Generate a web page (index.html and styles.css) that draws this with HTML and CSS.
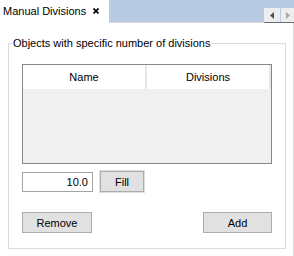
FILE: index.html
```html
<!DOCTYPE html>
<html lang="en">
<head>
    <meta charset="UTF-8">
    <meta name="viewport" content="width=device-width, initial-scale=1.0">
    <title>Manual Divisions</title>
    <link rel="stylesheet" href="styles.css">
</head>
<body>
    <div class="tabbar">
        <div class="tab">
            <span class="tab-title">Manual Divisions</span>
            <svg class="tab-close" width="6" height="6" viewBox="0 0 6 6">
                <path d="M0.5 0.5 L5.5 5.5 M5.5 0.5 L0.5 5.5" stroke="#000" stroke-width="1.7"/>
            </svg>
        </div>
        <div class="tab-strip">
            <div class="scroll-btns">
                <span class="scroll-btn scroll-left">
                    <svg width="4" height="7" viewBox="0 0 4 7"><path d="M4 0 L0 3.5 L4 7 Z" fill="#505050"/></svg>
                </span>
                <span class="scroll-btn scroll-right">
                    <svg width="4" height="7" viewBox="0 0 4 7"><path d="M0 0 L4 3.5 L0 7 Z" fill="#a8a8a8"/></svg>
                </span>
            </div>
        </div>
    </div>

    <div class="pane">
        <fieldset class="group">
            <legend>Objects with specific number of divisions</legend>

            <div class="grid">
                <div class="grid-head">
                    <div class="grid-col">Name</div>
                    <div class="grid-col">Divisions</div>
                </div>
                <div class="grid-body"></div>
            </div>

            <div class="fill-row">
                <input type="text" class="num-input" value="10.0">
                <button class="btn btn-fill">Fill</button>
            </div>

            <div class="action-row">
                <button class="btn btn-remove">Remove</button>
                <button class="btn btn-add">Add</button>
            </div>
        </fieldset>
    </div>
</body>
</html>
```

FILE: styles.css
```css
body {
    margin: 0;
    width: 294px;
    height: 256px;
    overflow: hidden;
    background-color: #fff;
    color: #000;
    font-family: "Liberation Sans", Arial, sans-serif;
    font-size: 11px;
}

.tabbar {
    display: flex;
    height: 23px;
}

.tab {
    width: 109px;
    box-sizing: border-box;
    display: flex;
    align-items: center;
    padding: 0 0 1px 3px;
    background-color: #fff;
}

.tab-close {
    margin-left: 7px;
    margin-top: -1px;
}

.tab-strip {
    flex: 1;
    display: flex;
    justify-content: flex-end;
    align-items: flex-end;
    background-color: #b8cbe3;
    border-bottom: 1px solid #dadada;
}

.scroll-btns {
    display: flex;
    gap: 1px;
    width: 30px;
    margin-bottom: -1px;
    border-bottom: 1px solid #6e6e6e;
}

.scroll-btn {
    height: 14px;
    display: flex;
    align-items: center;
    justify-content: center;
    background-color: #ededed;
}

.scroll-left {
    width: 16px;
}

.scroll-right {
    width: 13px;
}

.pane {
    height: 233px;
    box-sizing: border-box;
    padding: 13px 0 0 8px;
    border-right: 1px solid #d9d9d9;
}

.group {
    width: 278px;
    box-sizing: border-box;
    margin: 0;
    padding: 14px 13px 15px 13px;
    border: 1px solid #dcdcdc;
}

.group legend {
    margin-left: -10px;
    padding: 0 1px;
    line-height: 14px;
}

.grid {
    height: 100px;
    box-sizing: border-box;
    display: flex;
    flex-direction: column;
    border: 1px solid #828790;
}

.grid-head {
    display: flex;
    height: 24px;
    background-color: #fff;
}

.grid-col {
    flex: 1;
    display: flex;
    align-items: center;
    justify-content: center;
    border-right: 2px solid #e6e6e6;
}

.grid-body {
    flex: 1;
    background-color: #f0f0f0;
}

.fill-row {
    display: flex;
    align-items: flex-start;
    gap: 7px;
    margin-top: 7px;
}

.num-input {
    width: 71px;
    height: 20px;
    box-sizing: border-box;
    margin: 1px 0 0 0;
    padding: 0 4px 0 0;
    border: 1px solid #a3a3a3;
    font: inherit;
    text-align: right;
    outline: none;
}

.btn {
    height: 21px;
    padding: 0;
    background-color: #e1e1e1;
    border: 1px solid #adadad;
    color: #000;
    font: inherit;
}

.btn-fill {
    width: 44px;
    box-shadow: 0 0 0 1px #dedede;
}

.action-row {
    display: flex;
    justify-content: space-between;
    margin-top: 20px;
}

.btn-remove {
    width: 70px;
}

.btn-add {
    width: 69px;
}
```
